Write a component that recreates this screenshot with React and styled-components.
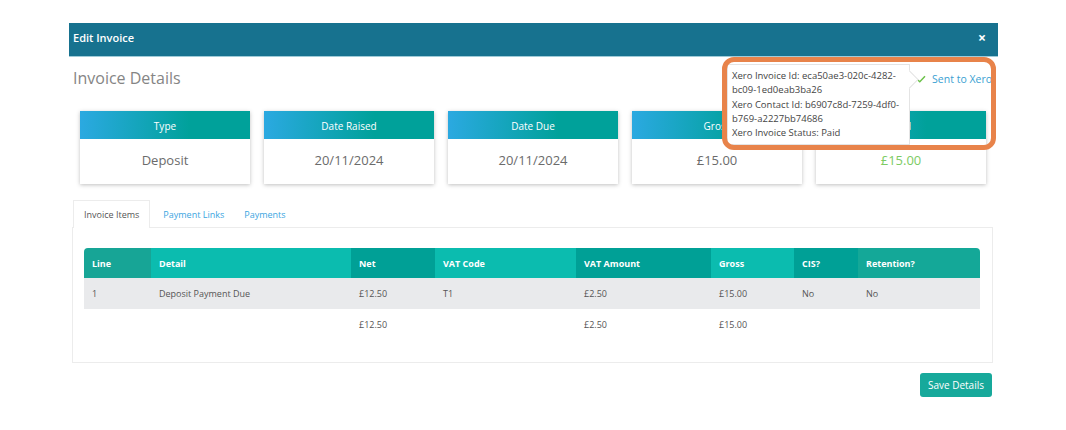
import styled, { createGlobalStyle } from "styled-components";

const GlobalStyle = createGlobalStyle`
  body {
    margin: 0;
    background: #ffffff;
    font-family: "Open Sans", "Liberation Sans", sans-serif;
  }
`;

const cards = [
  { label: "Type", value: "Deposit" },
  { label: "Date Raised", value: "20/11/2024" },
  { label: "Date Due", value: "20/11/2024" },
  { label: "Gross", value: "£15.00" },
  { label: "Paid", value: "£15.00", paid: true },
];

const columns = [
  { name: "Line", width: 67, bg: "#17a596" },
  { name: "Detail", width: 200, bg: "#0bbcaf" },
  { name: "Net", width: 84, bg: "#00a096" },
  { name: "VAT Code", width: 141, bg: "#0bbcaf" },
  { name: "VAT Amount", width: 135, bg: "#00a096" },
  { name: "Gross", width: 83, bg: "#0bbcaf" },
  { name: "CIS?", width: 64, bg: "#00a096" },
  { name: "Retention?", width: 122, bg: "#14a898" },
];

const rows = [
  { cells: ["1", "Deposit Payment Due", "£12.50", "T1", "£2.50", "£15.00", "No", "No"], shaded: true },
  { cells: ["", "", "£12.50", "", "£2.50", "£15.00", "", ""] },
];

export default function App() {
  return (
    <>
      <GlobalStyle />
      <Modal>
        <Header>
          <span>Edit Invoice</span>
          <Close>×</Close>
        </Header>
        <Body>
          <TitleRow>
            <Title>Invoice Details</Title>
            <XeroStatus>
              <svg width="10" height="8" viewBox="0 0 10 8">
                <path d="M1 4.2 L3.8 6.8 L9 1.2" fill="none" stroke="#6cc24a" strokeWidth="1.5" />
              </svg>
              Sent to Xero
            </XeroStatus>
          </TitleRow>
          <CardRow>
            {cards.map((c) => (
              <Card key={c.label}>
                <CardHead>{c.label}</CardHead>
                <CardValue $paid={c.paid}>{c.value}</CardValue>
              </Card>
            ))}
          </CardRow>
          <Tabs>
            <Tab $active>Invoice Items</Tab>
            <Tab>Payment Links</Tab>
            <Tab>Payments</Tab>
          </Tabs>
          <Panel>
            <Table>
              <colgroup>
                {columns.map((c) => (
                  <col key={c.name} style={{ width: c.width }} />
                ))}
              </colgroup>
              <thead>
                <tr>
                  {columns.map((c) => (
                    <Th key={c.name} $bg={c.bg}>{c.name}</Th>
                  ))}
                </tr>
              </thead>
              <tbody>
                {rows.map((r, i) => (
                  <Tr key={i} $shaded={r.shaded}>
                    {r.cells.map((v, j) => (
                      <Td key={j}>{v}</Td>
                    ))}
                  </Tr>
                ))}
              </tbody>
            </Table>
          </Panel>
          <Footer>
            <SaveButton>Save Details</SaveButton>
          </Footer>
        </Body>
        <Tooltip>
          <div>Xero Invoice Id: eca50ae3-020c-4282-bc09-1ed0eab3ba26</div>
          <div>Xero Contact Id: b6907c8d-7259-4df0-b769-a2227bb74686</div>
          <div>Xero Invoice Status: Paid</div>
        </Tooltip>
        <Highlight />
      </Modal>
    </>
  );
}

const Modal = styled.div`
  position: relative;
  margin: 23px 0 0 69px;
  width: 929px;
`;

const Header = styled.div`
  height: 33px;
  box-sizing: border-box;
  background: #17728f;
  border-bottom: 1px solid #9fcbd8;
  color: #ffffff;
  font-size: 11px;
  font-weight: 600;
  display: flex;
  align-items: center;
  justify-content: space-between;
  padding: 0 12px 5px 4px;
  height: 34px;
`;

const Close = styled.span`
  font-size: 14px;
  font-weight: 700;
`;

const Body = styled.div`
  padding: 0 5px 0 3px;
`;

const TitleRow = styled.div`
  display: flex;
  justify-content: space-between;
  align-items: center;
  margin-top: 9px;
  height: 24px;
`;

const Title = styled.div`
  font-size: 16px;
  color: #858585;
  padding-left: 1px;
`;

const XeroStatus = styled.div`
  display: flex;
  align-items: center;
  gap: 6px;
  color: #3a9fd2;
  font-size: 10.5px;
  margin-right: 1px;
  padding-top: 2px;
  white-space: nowrap;
`;

const CardRow = styled.div`
  display: grid;
  grid-template-columns: repeat(5, 170px);
  gap: 14px;
  margin: 21px 0 0 8px;
`;

const Card = styled.div`
  background: #ffffff;
  box-shadow: 0 1px 4px rgba(0, 0, 0, 0.25);
`;

const CardHead = styled.div`
  height: 28px;
  background: linear-gradient(to right, #2ba9e1 0%, #00a19a 65%);
  color: #ffffff;
  font-size: 10px;
  display: flex;
  align-items: center;
  justify-content: center;
  padding-top: 1px;
  box-sizing: border-box;
`;

const CardValue = styled.div`
  height: 45px;
  box-sizing: border-box;
  padding-bottom: 4px;
  display: flex;
  align-items: center;
  justify-content: center;
  font-size: 13px;
  color: ${(p) => (p.$paid ? "#7ccb63" : "#6b6b6b")};
`;

const Tabs = styled.div`
  display: flex;
  margin-top: 16px;
  padding-left: 1px;
`;

const Tab = styled.div`
  height: 27px;
  padding: 0 ${(p) => (p.$active ? "10px" : "6px")} 0 10px;
  display: flex;
  align-items: center;
  font-size: 9px;
  color: ${(p) => (p.$active ? "#555555" : "#3aa5df")};
  background: ${(p) => (p.$active ? "#ffffff" : "transparent")};
  border: 1px solid ${(p) => (p.$active ? "#ececec" : "transparent")};
  border-bottom: none;
  margin-bottom: -1px;
  position: relative;
  margin-right: 2px;
`;

const Panel = styled.div`
  border: 1px solid #ececec;
  padding: 20px 13px 22px 11px;
`;

const Table = styled.table`
  width: 896px;
  border-collapse: collapse;
  table-layout: fixed;
  font-size: 9px;
  th:first-child {
    border-top-left-radius: 4px;
  }
  th:last-child {
    border-top-right-radius: 4px;
  }
`;

const Th = styled.th`
  height: 30px;
  background: ${(p) => p.$bg};
  color: #ffffff;
  font-weight: 700;
  text-align: left;
  padding: 0 8px;
`;

const Tr = styled.tr`
  background: ${(p) => (p.$shaded ? "#e9eaec" : "#ffffff")};
`;

const Td = styled.td`
  height: 31px;
  padding: 0 8px;
  color: #555555;
`;

const Footer = styled.div`
  display: flex;
  justify-content: flex-end;
  margin-top: 10px;
  padding-right: 1px;
`;

const SaveButton = styled.button`
  background: #17a99b;
  color: #ffffff;
  border: none;
  border-radius: 3px;
  height: 24px;
  padding: 0 8px;
  font-family: inherit;
  font-size: 10px;
`;

const Tooltip = styled.div`
  position: absolute;
  left: 658px;
  top: 41px;
  width: 173px;
  padding: 4px 4px;
  background: #ffffff;
  border: 1px solid #e4e4e4;
  font-size: 9.5px;
  line-height: 14.3px;
  color: #444444;
  &::after {
    content: "";
    position: absolute;
    right: -7px;
    top: 8px;
    width: 12px;
    height: 12px;
    background: #ffffff;
    border-top: 1px solid #e4e4e4;
    border-right: 1px solid #e4e4e4;
    transform: rotate(45deg);
  }
`;

const Highlight = styled.div`
  position: absolute;
  left: 653px;
  top: 34px;
  width: 264px;
  height: 83px;
  border: 5px solid #e8834a;
  border-radius: 12px;
  pointer-events: none;
`;
